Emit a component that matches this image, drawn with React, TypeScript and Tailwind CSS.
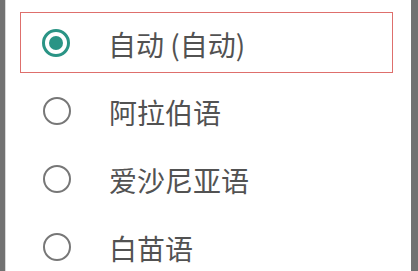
import { useState } from "react";

const languages = ["自动 (自动)", "阿拉伯语", "爱沙尼亚语", "白苗语"];

function Radio({ checked }: { checked: boolean }) {
  return checked ? (
    <div className="w-[28px] h-[28px] shrink-0 rounded-full border-[3px] border-[#2a9485] flex items-center justify-center">
      <div className="w-[14px] h-[14px] rounded-full bg-[#2a9485]" />
    </div>
  ) : (
    <div className="w-[28px] h-[28px] shrink-0 rounded-full border-[2.5px] border-[#777777]" />
  );
}

export default function App() {
  const [selected] = useState(0);

  return (
    <div
      className="w-[418px] h-[271px] overflow-hidden flex bg-[#727272]"
      style={{ fontFamily: '"Noto Sans CJK SC", "Noto Sans", sans-serif' }}
    >
      <div className="ml-[5px] w-[406px] h-full bg-white border-l border-[#d8d8d8] pt-[12px] overflow-hidden">
        {languages.map((lang, i) =>
          i === selected ? (
            <div
              key={lang}
              className="ml-[14px] mr-[18px] h-[61px] border border-[#de6f6c] flex items-center pl-[21px] mb-[4px]"
            >
              <Radio checked />
              <span className="ml-[38px] pt-[2px] text-[28px] leading-none text-[#525252]">{lang}</span>
            </div>
          ) : (
            <div key={lang} className="h-[68px] flex items-center pl-[37px]">
              <Radio checked={false} />
              <span className="ml-[38px] pt-[2px] text-[28px] leading-none text-[#525252]">{lang}</span>
            </div>
          )
        )}
      </div>
    </div>
  );
}
